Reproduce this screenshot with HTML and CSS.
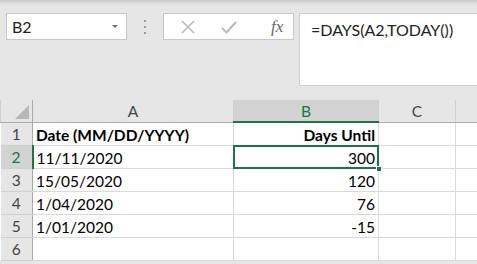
FILE: index.html
```html
<!DOCTYPE html>
<html lang="en">

<head>
    <meta charset="UTF-8">
    <title>DAYS</title>
    <link rel="stylesheet" href="styles.css">
</head>

<body>
    <div class="toolbar">
        <div class="namebox">
            <span>B2</span>
            <span class="caret"></span>
        </div>
        <div class="grip"><i></i><i></i><i></i></div>
        <div class="fxbtns">
            <svg class="ico" width="16" height="16" viewBox="0 0 16 16">
                <path d="M2 2 L14 14 M14 2 L2 14" stroke="#bcbcbc" stroke-width="1.6" fill="none" />
            </svg>
            <svg class="ico" width="18" height="16" viewBox="0 0 18 16">
                <path d="M2 9 L6.5 13.5 L16 3" stroke="#bcbcbc" stroke-width="2.2" fill="none" />
            </svg>
            <span class="fx">fx</span>
        </div>
        <div class="formula">=DAYS(A2,TODAY())</div>
    </div>

    <table class="sheet">
        <colgroup>
            <col class="c-row">
            <col class="c-a">
            <col class="c-b">
            <col class="c-c">
            <col class="c-d">
        </colgroup>
        <tr class="head">
            <th class="corner"><span class="tri"></span></th>
            <th>A</th>
            <th class="sel">B</th>
            <th>C</th>
            <th></th>
        </tr>
        <tr>
            <th class="num">1</th>
            <td class="bold">Date (MM/DD/YYYY)</td>
            <td class="bold r">Days Until</td>
            <td></td>
            <td></td>
        </tr>
        <tr>
            <th class="num sel">2</th>
            <td>11/11/2020</td>
            <td class="r active">300<span class="handle"></span></td>
            <td></td>
            <td></td>
        </tr>
        <tr>
            <th class="num">3</th>
            <td>15/05/2020</td>
            <td class="r">120</td>
            <td></td>
            <td></td>
        </tr>
        <tr>
            <th class="num">4</th>
            <td>1/04/2020</td>
            <td class="r">76</td>
            <td></td>
            <td></td>
        </tr>
        <tr>
            <th class="num">5</th>
            <td>1/01/2020</td>
            <td class="r">-15</td>
            <td></td>
            <td></td>
        </tr>
        <tr>
            <th class="num">6</th>
            <td></td>
            <td></td>
            <td></td>
            <td></td>
        </tr>
    </table>
</body>

</html>
```

FILE: styles.css
```css
* {
    margin: 0;
    padding: 0;
    box-sizing: border-box;
}

body {
    width: 477px;
    height: 264px;
    overflow: hidden;
    background: #e6e6e6;
    font-family: Lato, "Liberation Sans", sans-serif;
    color: #000;
}

/* formula bar */
.toolbar {
    height: 100px;
    display: flex;
    align-items: flex-start;
    padding: 13px 0 0 6px;
    background: linear-gradient(#c9c9c9 0, #e2e2e2 4px, #e6e6e6 6px);
}

.namebox {
    width: 121px;
    height: 27px;
    background: #fff;
    border: 1px solid #c8c8c8;
    display: flex;
    align-items: center;
    justify-content: space-between;
    padding: 0 8px 0 5px;
    font-size: 16px;
    color: #222;
}

.caret {
    width: 0;
    height: 0;
    border-left: 3px solid transparent;
    border-right: 3px solid transparent;
    border-top: 3px solid #6e6e6e;
}

.grip {
    width: 36px;
    height: 27px;
    display: flex;
    flex-direction: column;
    align-items: center;
    justify-content: center;
    gap: 4px;
}

.grip i {
    width: 2px;
    height: 2px;
    background: #9c9c9c;
}

.fxbtns {
    width: 131px;
    height: 27px;
    background: #fff;
    border: 1px solid #c8c8c8;
    display: flex;
    align-items: center;
    padding-left: 16px;
}

.fxbtns .ico {
    margin-right: 24px;
}

.fx {
    margin-left: 9px;
    font-family: "Liberation Serif", serif;
    font-style: italic;
    font-size: 17px;
    color: #6a6a6a;
}

.formula {
    margin-left: 5px;
    flex: 1;
    height: 73px;
    background: #fff;
    border: 1px solid #d0d0d0;
    border-right: none;
    padding: 6px 0 0 11px;
    font-size: 16px;
    color: #222;
}

/* grid */
.sheet {
    border-collapse: collapse;
    table-layout: fixed;
    width: 477px;
    background: #fff;
    font-size: 15.5px;
}

.c-row { width: 32px; }
.c-a { width: 201px; }
.c-b { width: 145px; }
.c-c { width: 77px; }
.c-d { width: 22px; }

.sheet th {
    background: #e6e6e6;
    font-weight: normal;
    color: #444;
    border: 1px solid #cfcfcf;
}

.sheet .head th {
    height: 22px;
    border-top: none;
    border-bottom: 1px solid #ababab;
    vertical-align: middle;
}

.sheet .head th.corner {
    position: relative;
    border-right: 1px solid #ababab;
}

.tri {
    position: absolute;
    right: 3px;
    bottom: 3px;
    width: 0;
    height: 0;
    border-left: 14px solid transparent;
    border-bottom: 14px solid #b8b8b8;
}

.sheet .head th.sel {
    background: #d3d3d3;
    color: #217346;
    border-bottom: 2px solid #217346;
}

.sheet th.num {
    border-left: none;
    border-right: 1px solid #ababab;
    text-align: center;
    height: 23px;
}

.sheet th.num.sel {
    background: #d3d3d3;
    color: #217346;
    border-right: 2px solid #217346;
}

.sheet td {
    height: 23px;
    border: 1px solid #dadada;
    padding: 0 3px 1px 3px;
    vertical-align: bottom;
    white-space: nowrap;
    overflow: hidden;
}

.sheet td.bold {
    font-weight: bold;
}

.sheet td.r {
    text-align: right;
}

.sheet td.active {
    position: relative;
    overflow: visible;
}

.sheet td.active::after {
    content: "";
    position: absolute;
    left: -1px;
    top: -1px;
    right: -1px;
    bottom: -1px;
    border: 2px solid #217346;
}

.handle {
    position: absolute;
    right: -4px;
    bottom: -4px;
    width: 6px;
    height: 6px;
    background: #217346;
    border: 1px solid #fff;
    z-index: 1;
}
```
